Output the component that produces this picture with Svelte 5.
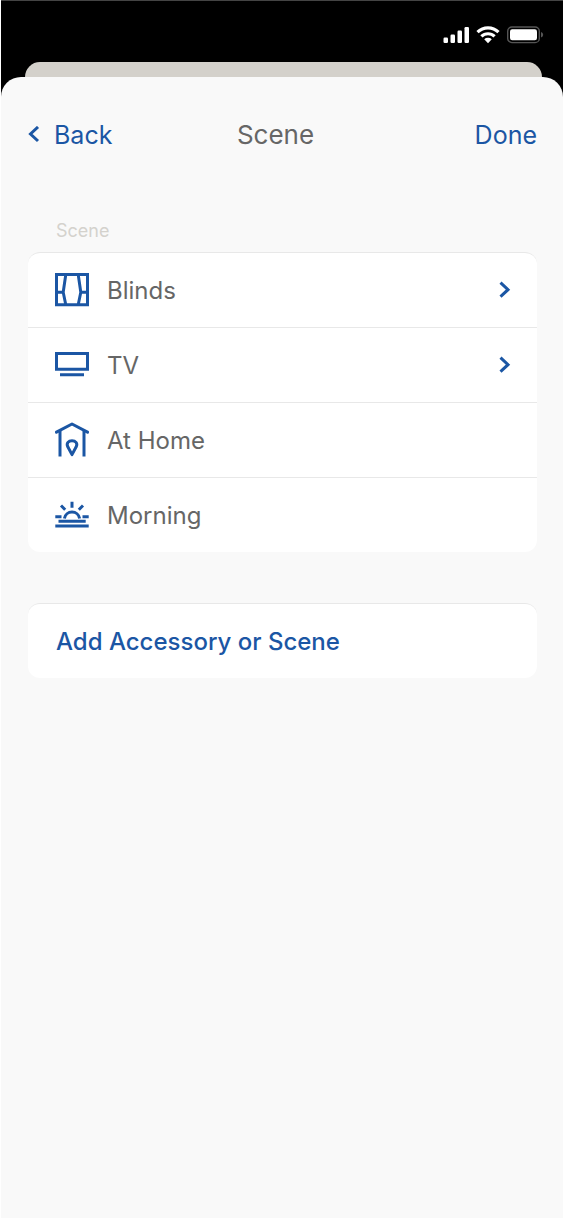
<script>
  const items = [
    { name: 'Blinds', icon: 'blinds', more: true },
    { name: 'TV', icon: 'tv', more: true },
    { name: 'At Home', icon: 'home', more: false },
    { name: 'Morning', icon: 'morning', more: false }
  ];
</script>

{#snippet glyph(kind)}
  <svg class="glyph" viewBox="0 0 34 36" aria-hidden="true">
    {#if kind === 'blinds'}
      <path d="M1.5 2.5h31v30.3h-31z M10.8 2.5 L8.2 20.3 L10.8 32.8 M23.2 2.5 L25.8 20.3 L23.2 32.8 M1.5 20.3h6.7 M25.8 20.3h6.7" />
    {:else if kind === 'tv'}
      <path d="M1.5 6.5h31v15.8h-31z M5 27.8h24" />
    {:else if kind === 'home'}
      <path d="M1.5 10.2 L17 2 L32.5 10.2" stroke-linecap="round" stroke-linejoin="round" />
      <path d="M5 9v25.5 M29 9v25.5" />
      <path d="M17 32.6 L12.8 24.8 C11 21 13.6 18.8 17 18.8 S23 21 21.2 24.8 Z" stroke-linejoin="round" />
    {:else}
      <path d="M9.4 21.5a7.7 7.7 0 0 1 15.2 0 M17 4.7v6 M6 8.5l4.2 4.2 M28 8.5l-4.2 4.2 M.3 19.8h6.2 M27.5 19.8h6.2 M3.5 24.3h27.2 M.3 28.9h33.4" />
    {/if}
  </svg>
{/snippet}

{#snippet chevron()}
  <svg class="chevron" viewBox="0 0 12 18" aria-hidden="true">
    <path d="M1.5 1.7 L9 8.7 L1.5 15.7" />
  </svg>
{/snippet}

<div class="screen">
  <div class="status">
    <svg width="27" height="18" viewBox="0 0 27 18" aria-label="Signal">
      <g fill="#fff">
        <rect x="0.5" y="11.5" width="4.5" height="5.5" rx="1.2" />
        <rect x="7.5" y="8.5" width="4.5" height="8.5" rx="1.2" />
        <rect x="14.5" y="4.5" width="4.5" height="12.5" rx="1.2" />
        <rect x="21.5" y="1" width="4.5" height="16" rx="1.2" />
      </g>
    </svg>
    <svg width="24" height="18" viewBox="0 0 24 18" aria-label="Wi-Fi">
      <g fill="none" stroke="#fff" stroke-width="3.2">
        <path d="M1.5 6.2a15 15 0 0 1 21 0" />
        <path d="M5.4 10.4a9.5 9.5 0 0 1 13.2 0" />
      </g>
      <path d="M8.2 13.3a5.6 5.6 0 0 1 7.6 0L12 17.2z" fill="#fff" />
    </svg>
    <svg width="38" height="18" viewBox="0 0 38 18" aria-label="Battery">
      <rect x="1.7" y="1" width="31.6" height="15.6" rx="4.2" fill="none" stroke="#555" stroke-width="1.4" />
      <rect x="4" y="3.3" width="27" height="11" rx="2.2" fill="#fff" />
      <path d="M35 6.1q2.2.8 2.2 2.7t-2.2 2.7z" fill="#555" />
    </svg>
  </div>
  <div class="behind"></div>

  <main class="sheet">
    <header>
      <button class="back" type="button">
        <svg width="12" height="18" viewBox="0 0 12 18" aria-hidden="true">
          <path d="M10 1 L2.5 8 L10 15" />
        </svg>
        Back
      </button>
      <h1>Scene</h1>
      <button class="done" type="button">Done</button>
    </header>

    <section>
      <h2>Scene</h2>
      <ul class="card">
        {#each items as item}
          <li>
            {#if item.more}
              <button class="row" type="button">
                {@render glyph(item.icon)}
                <span class="name">{item.name}</span>
                {@render chevron()}
              </button>
            {:else}
              <div class="row">
                {@render glyph(item.icon)}
                <span class="name">{item.name}</span>
              </div>
            {/if}
          </li>
        {/each}
      </ul>
    </section>

    <div class="card">
      <button class="row add" type="button"><span>Add Accessory or Scene</span></button>
    </div>
  </main>
</div>

<style>
  :global(body) {
    margin: 0;
    background: #fff;
  }

  .screen {
    display: flex;
    flex-direction: column;
    box-sizing: border-box;
    min-height: 100vh;
    border-left: 1px solid #fff;
    border-bottom: 1px solid #fff;
    background: linear-gradient(#444 1px, #000 1px);
    color: #666;
    font-family: Inter, 'Liberation Sans', sans-serif;
  }

  button {
    margin: 0;
    padding: 0;
    border: 0;
    background: none;
    color: #1b56a4;
    font: inherit;
    text-align: left;
    cursor: pointer;
  }

  .status {
    display: flex;
    justify-content: flex-end;
    align-items: flex-start;
    gap: 6px;
    height: 36px;
    padding: 26px 19px 0 0;
  }

  .behind {
    height: 15px;
    margin: 0 21px 0 24px;
    border-radius: 15px 15px 0 0;
    background: #d4d1cb;
  }

  .sheet {
    flex: 1;
    padding: 0 26px 40px 27px;
    border-radius: 20px 20px 0 0;
    background: #f9f9f9;
  }

  header {
    display: grid;
    grid-template-columns: 1fr auto 1fr;
    align-items: center;
    padding-top: 42px;
    font-size: 25px;
    line-height: 32px;
  }

  .back {
    display: flex;
    align-items: center;
    gap: 14px;
  }

  .back svg {
    fill: none;
    stroke: #1b56a4;
    stroke-width: 3;
  }

  .done {
    justify-self: end;
  }

  h1 {
    margin: 0;
    padding-right: 14px;
    font-size: 26px;
    font-weight: 400;
    line-height: 32px;
  }

  h2 {
    margin: 68px 0 9px;
    padding-left: 28px;
    color: #d4d2cd;
    font-size: 18px;
    font-weight: 400;
    line-height: 24px;
  }

  .card {
    margin: 0;
    padding: 0;
    border-radius: 12px;
    background: #fff;
    list-style: none;
    overflow: hidden;
    border-top: 1px solid #e8e8e8;
  }

  section {
    margin-bottom: 51px;
  }

  li + li {
    border-top: 1px solid #e8e8e8;
  }

  .row {
    display: flex;
    align-items: center;
    gap: 18px;
    box-sizing: border-box;
    width: 100%;
    height: 74px;
    padding: 0 26px 0 27px;
    font-size: 24px;
    line-height: 32px;
  }

  .row span {
    padding-top: 2px;
  }

  .name {
    flex: 1;
    color: #666;
  }

  .add {
    padding-left: 28px;
    font-weight: 500;
  }

  .glyph {
    width: 34px;
    height: 36px;
    fill: none;
    stroke: #1b56a4;
    stroke-width: 3;
  }

  .chevron {
    width: 12px;
    height: 18px;
    fill: none;
    stroke: #1b56a4;
    stroke-width: 3;
  }
</style>
